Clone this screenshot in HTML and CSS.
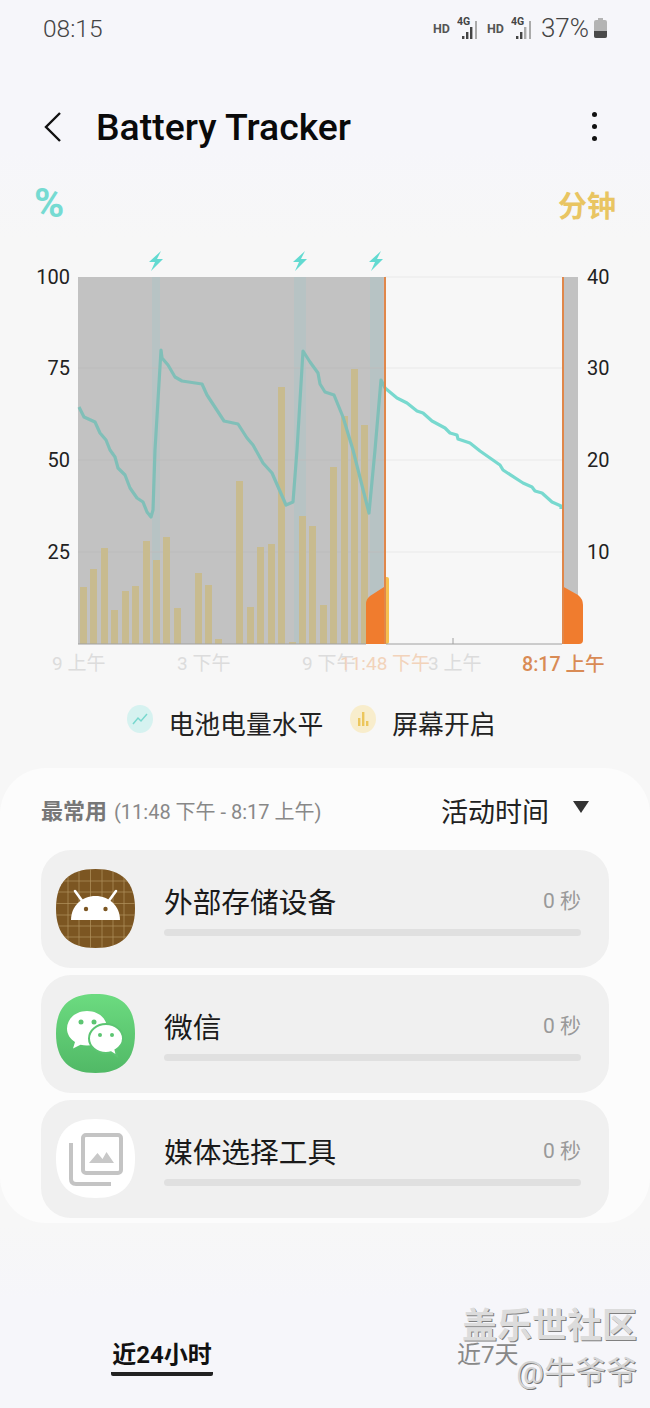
FILE: index.html
```html
<!DOCTYPE html>
<html lang="zh-CN">
<head>
    <meta charset="UTF-8">
    <meta name="viewport" content="width=device-width, initial-scale=1.0">
    <title>Battery Tracker</title>
    <link rel="stylesheet" href="styles.css">
</head>
<body>
    <!-- Status bar -->
    <div class="status-bar">
        <span class="status-time">08:15</span>
        <div class="status-icons">
            <span class="net-hd">HD</span>
            <svg class="net-signal" viewBox="0 0 24 24">
                <text x="0" y="9" class="net-4g">4G</text>
                <rect x="5" y="20" width="2.400" height="3"/>
                <rect x="9" y="16" width="2.400" height="7"/>
                <rect x="13" y="11" width="2.400" height="12"/>
                <rect x="18" y="5" width="2" height="18" class="bar-off"/>
            </svg>
            <span class="net-hd">HD</span>
            <svg class="net-signal" viewBox="0 0 24 24">
                <text x="0" y="9" class="net-4g">4G</text>
                <rect x="5" y="20" width="2.400" height="3"/>
                <rect x="9" y="16" width="2.400" height="7"/>
                <rect x="13" y="11" width="2.400" height="12" class="bar-off"/>
                <rect x="18" y="5" width="2" height="18" class="bar-off"/>
            </svg>
            <span class="status-level">37%</span>
            <svg class="status-battery" viewBox="0 0 13 20">
                <path d="M4 0h5v2h2a2 2 0 0 1 2 2v14a2 2 0 0 1-2 2H2a2 2 0 0 1-2-2V4a2 2 0 0 1 2-2h2z" fill="#b4b4b4"/>
                <path d="M0 13h13v5a2 2 0 0 1-2 2H2a2 2 0 0 1-2-2z" fill="#4a4a4a"/>
            </svg>
        </div>
    </div>

    <!-- Header -->
    <div class="app-header">
        <svg class="back-icon" viewBox="0 0 20 32"><path d="M17 2 3 16l14 14"/></svg>
        <h1 class="app-title">Battery Tracker</h1>
        <div class="more-icon"><i></i><i></i><i></i></div>
    </div>

    <div class="axis-titles">
        <span class="axis-percent">%</span>
        <span class="axis-minutes">分钟</span>
    </div>

    <!-- Chart, viewBox uses the page coordinates -->
    <svg class="chart" viewBox="0 240 650 450">
        <defs>
            <path id="bolt" d="M5-10-7 1h6l-4 9L7-2H1z"/>
        </defs>

        <rect class="plot-off" x="78" y="277" width="307" height="367"/>
        <rect class="plot-off" x="562" y="277" width="16" height="367"/>

        <rect class="band" x="152" y="277" width="8" height="367"/>
        <rect class="band" x="294" y="277" width="12" height="367"/>
        <rect class="band" x="370" y="277" width="13" height="367"/>

        <path class="grid-off" d="M78 368H385M78 460H385M78 552H385"/>
        <path class="grid-on" d="M385 277H562M385 368H562M385 460H562M385 552H562"/>

        <g class="bars">
            <rect x="80" y="587" width="7" height="57"/>
            <rect x="90" y="569" width="7" height="75"/>
            <rect x="101" y="548" width="7" height="96"/>
            <rect x="111" y="610" width="7" height="34"/>
            <rect x="122" y="591" width="7" height="53"/>
            <rect x="132" y="586" width="7" height="58"/>
            <rect x="143" y="541" width="7" height="103"/>
            <rect x="153" y="560" width="7" height="84"/>
            <rect x="163" y="537" width="7" height="107"/>
            <rect x="174" y="608" width="7" height="36"/>
            <rect x="195" y="573" width="7" height="71"/>
            <rect x="205" y="585" width="7" height="59"/>
            <rect x="215" y="639" width="7" height="5"/>
            <rect x="236" y="481" width="7" height="163"/>
            <rect x="247" y="607" width="7" height="37"/>
            <rect x="257" y="547" width="7" height="97"/>
            <rect x="268" y="544" width="7" height="100"/>
            <rect x="278" y="387" width="7" height="257"/>
            <rect x="289" y="642" width="7" height="2"/>
            <rect x="299" y="516" width="7" height="128"/>
            <rect x="309" y="526" width="7" height="118"/>
            <rect x="320" y="605" width="7" height="39"/>
            <rect x="330" y="467" width="7" height="177"/>
            <rect x="341" y="416" width="7" height="228"/>
            <rect x="351" y="369" width="7" height="275"/>
            <rect x="361" y="425" width="7" height="219"/>
        </g>
        <rect class="bar-now" x="384" y="577" width="5" height="67" rx="2"/>

        <path class="level-off" d="M79 407 84 417 95 422 100 433 106 440 110 450 115 457 118 468 125 475 130 488 137 498 143 502 147 512 151 517 153 510 155 450 161 350 162 358 168 365 175 377 182 381 202 384 207 395 224 421 238 424 247 438 253 445 263 463 272 473 286 505 293 502 297 450 303 351 310 362 318 373 320 384 325 392 334 395 343 417 353 450 369 513 375 450 381 380 385 388"/>
        <path class="level-on" d="M385 388 397 398 407 403 417 411 423 413 432 421 445 428 450 433 457 435 458 439 470 443 480 451 500 465 503 470 523 483 532 487 535 491 542 493 552 502 561 506 561 509"/>

        <path class="active" d="M366 644V604Q366 599 370 596L384 587H386V644Z"/>
        <path class="active" d="M562 644V586L578 595Q583 599 583 605V640Q583 644 579 644Z"/>
        <rect class="marker" x="384" y="277" width="2" height="367"/>
        <rect class="marker" x="562" y="277" width="2" height="367"/>

        <path class="baseline" d="M78 644H366M386 644H562"/>
        <path class="baseline" d="M453 638V644"/>

        <use href="#bolt" class="bolt" x="156" y="261"/>
        <use href="#bolt" class="bolt" x="300" y="261"/>
        <use href="#bolt" class="bolt" x="376" y="261"/>

        <text class="tick tick-left" x="70" y="284">100</text>
        <text class="tick tick-left" x="70" y="375">75</text>
        <text class="tick tick-left" x="70" y="467">50</text>
        <text class="tick tick-left" x="70" y="559">25</text>
        <text class="tick" x="587" y="284">40</text>
        <text class="tick" x="587" y="375">30</text>
        <text class="tick" x="587" y="467">20</text>
        <text class="tick" x="587" y="559">10</text>

        <text class="time-label" x="52" y="670">9 上午</text>
        <text class="time-label" x="177" y="670">3 下午</text>
        <text class="time-label" x="302" y="670">9 下午</text>
        <text class="time-label" x="428" y="670">3 上午</text>
        <text class="time-label time-start" x="340" y="670">11:48 下午</text>
        <text class="time-label time-end" x="522" y="671">8:17 上午</text>
    </svg>

    <!-- Legend -->
    <div class="legend">
        <div class="legend-item">
            <svg class="legend-icon" viewBox="0 0 26 28">
                <ellipse cx="13" cy="14" rx="13" ry="14" fill="#d6f2f0"/>
                <path d="M6 19l5-6 3 3 6-7" fill="none" stroke="#78d8ce" stroke-width="1.500"/>
            </svg>
            <span>电池电量水平</span>
        </div>
        <div class="legend-item">
            <svg class="legend-icon" viewBox="0 0 26 28">
                <ellipse cx="13" cy="14" rx="13" ry="14" fill="#f8edcc"/>
                <path d="M8 13h2.400v8H8zM12 7h2.400v14H12zM16 16h2.400v5H16z" fill="#ecc65c"/>
            </svg>
            <span>屏幕开启</span>
        </div>
    </div>

    <!-- Most used apps -->
    <div class="usage-card">
        <div class="usage-head">
            <div class="usage-title"><strong>最常用</strong> (11:48 下午 - 8:17 上午)</div>
            <div class="usage-sort">活动时间<i class="sort-arrow"></i></div>
        </div>

        <div class="app-list">
            <div class="app-row">
                <svg class="app-icon" viewBox="0 0 79 79">
                    <clipPath id="squircle-clip">
                        <path d="M39.500 0C66 0 79 13 79 39.500S66 79 39.500 79 0 66 0 39.500 13 0 39.500 0z"/>
                    </clipPath>
                    <g clip-path="url(#squircle-clip)">
                        <rect width="79" height="79" fill="#7c5622"/>
                        <path d="M12 0V79M23 0V79M34.500 0V79M46 0V79M57 0V79M68 0V79M0 12H79M0 23H79M0 34.500H79M0 46H79M0 57H79M0 68H79" fill="none" stroke="#b3935f" stroke-width=".7"/>
                    </g>
                    <path d="M19 22l8 11M60 22l-8 11" stroke="#fff" stroke-width="2.600" stroke-linecap="round"/>
                    <path d="M15 51C15 37 26 27 39.500 27S64 37 64 51z" fill="#fff"/>
                    <circle cx="30" cy="40" r="2.200" fill="#7c5622"/>
                    <circle cx="49.500" cy="40" r="2.200" fill="#7c5622"/>
                </svg>
                <div class="app-info">
                    <div class="app-line"><span class="app-name">外部存储设备</span><span class="app-time">0 秒</span></div>
                    <div class="app-bar"></div>
                </div>
            </div>
            <div class="app-row">
                <svg class="app-icon" viewBox="0 0 79 79">
                    <defs>
                        <linearGradient id="wechat-bg" x1="0" y1="0" x2="0" y2="1">
                            <stop offset="0" stop-color="#6cdb80"/>
                            <stop offset="1" stop-color="#51b966"/>
                        </linearGradient>
                    </defs>
                    <path d="M39.500 0C66 0 79 13 79 39.500S66 79 39.500 79 0 66 0 39.500 13 0 39.500 0z" fill="url(#wechat-bg)"/>
                    <path d="M31 17C19.500 17 11 25 11 34.500c0 6 3.400 10.500 8 13.500l-2 6.500 7.500-3.800c2 .6 4.300.8 6.500.8 11.500 0 20-8 20-17.500S42.500 17 31 17z" fill="#fff"/>
                    <path d="M50 30c-9.300 0-17 6.500-17 14.500S40.700 59 50 59c2 0 3.500-.2 5-.7l6 3.700-1.500-6c4.500-2.600 7.500-6.800 7.500-11.500C67 36.500 59.300 30 50 30z" fill="#fff" stroke="#5cc572" stroke-width="2"/>
                    <circle cx="25" cy="28" r="2.500" fill="#5cc572"/>
                    <circle cx="38" cy="28" r="2.500" fill="#5cc572"/>
                    <circle cx="44" cy="41" r="2" fill="#5cc572"/>
                    <circle cx="56" cy="41" r="2" fill="#5cc572"/>
                </svg>
                <div class="app-info">
                    <div class="app-line"><span class="app-name">微信</span><span class="app-time">0 秒</span></div>
                    <div class="app-bar"></div>
                </div>
            </div>
            <div class="app-row">
                <svg class="app-icon" viewBox="0 0 79 79">
                    <path d="M39.500 0C66 0 79 13 79 39.500S66 79 39.500 79 0 66 0 39.500 13 0 39.500 0z" fill="#fff"/>
                    <rect x="27" y="16" width="38" height="38" rx="3" fill="none" stroke="#c4c4c4" stroke-width="4"/>
                    <path d="M15 24V60Q15 65 20 65H55" fill="none" stroke="#c4c4c4" stroke-width="4"/>
                    <path d="M33 44 41.500 34 46.500 40 50.500 33 58 44z" fill="#c8c8c8"/>
                </svg>
                <div class="app-info">
                    <div class="app-line"><span class="app-name">媒体选择工具</span><span class="app-time">0 秒</span></div>
                    <div class="app-bar"></div>
                </div>
            </div>
        </div>
    </div>

    <!-- Tabs -->
    <div class="tabs">
        <span class="tab tab-active">近24小时</span>
        <span class="tab">近7天</span>
    </div>

    <div class="watermark">
        <div class="watermark-site">盖乐世社区</div>
        <div class="watermark-user">@牛爷爷</div>
    </div>
</body>
</html>
```

FILE: styles.css
```css
* {
    box-sizing: border-box;
}

body {
    margin: 0;
    width: 650px;
    height: 1408px;
    overflow: hidden;
    position: relative;
    background: linear-gradient(#f6f6fa 150px, #f7f7f7 240px, #f7f7f7 1225px, #f6f6fa 1300px);
    font-family: Roboto, "Noto Sans CJK SC", sans-serif;
    color: #222;
}

/* Status bar */
.status-bar {
    height: 56px;
    padding: 0 43px;
    display: flex;
    align-items: center;
    justify-content: space-between;
}

.status-time {
    font-size: 24.500px;
    font-weight: 300;
    color: #444;
}

.status-icons {
    display: flex;
    align-items: center;
}

.net-hd {
    font-size: 12.500px;
    font-weight: 700;
    color: #555;
    width: 24px;
}

.net-signal {
    width: 24px;
    height: 24px;
    margin-right: 6px;
    fill: #444;
}

.net-signal .bar-off {
    fill: #aaa;
}

.net-4g {
    font-size: 10.500px;
    font-weight: 700;
}

.status-level {
    font-size: 26px;
    font-weight: 300;
    color: #444;
}

.status-battery {
    width: 13px;
    height: 20px;
    margin-left: 5px;
}

/* Header */
.app-header {
    height: 60px;
    margin-top: 41px;
    padding: 0 53px 0 43px;
    display: flex;
    align-items: center;
}

.back-icon {
    width: 20px;
    height: 32px;
    fill: none;
    stroke: #111;
    stroke-width: 2.400;
}

.app-title {
    flex: 1;
    margin: 0 0 0 33px;
    font-size: 37.400px;
    font-weight: 500;
    color: #0a0a0a;
}

.more-icon {
    display: flex;
    flex-direction: column;
    gap: 7px;
    margin-top: -2px;
}

.more-icon i {
    width: 5px;
    height: 5px;
    border-radius: 50%;
    background: #111;
}

.axis-titles {
    height: 40px;
    margin-top: 27px;
    padding: 0 34px;
    display: flex;
    align-items: center;
    justify-content: space-between;
    font-weight: 700;
}

.axis-percent {
    margin-top: -2px;
    font-size: 41px;
    color: #76dbd2;
}

.axis-minutes {
    font-size: 29px;
    color: #e9c562;
}

/* Chart */
.chart {
    display: block;
    width: 650px;
    height: 450px;
    margin-top: 16px;
}

.plot-off {
    fill: #c2c2c2;
}

.band {
    fill: #b7c3c4;
}

.grid-off {
    stroke: #bcbcbc;
    stroke-width: 1;
}

.grid-on {
    stroke: #e9e9e9;
    stroke-width: 1;
}

.bars rect {
    fill: #c8bb8f;
}

.bar-now {
    fill: #f6c04f;
}

.level-off,
.level-on {
    fill: none;
    stroke-width: 3.200;
    stroke-linejoin: round;
}

.level-off {
    stroke: #80bfb8;
}

.level-on {
    stroke: #78d9cf;
}

.active {
    fill: #f07c2e;
}

.marker {
    fill: #e0874a;
}

.baseline {
    stroke: #a0a0a0;
    stroke-width: 1;
    fill: none;
}

.bolt {
    fill: #62dad1;
}

.tick {
    font-size: 20px;
    fill: #222;
}

.tick-left {
    text-anchor: end;
}

.time-label {
    font-size: 19px;
    fill: #dcdcdc;
}

.time-start {
    fill: #f2d3bb;
}

.time-end {
    font-size: 19.600px;
    font-weight: 500;
    fill: #d98b55;
}

/* Legend */
.legend {
    height: 64px;
    display: flex;
    justify-content: center;
    align-items: center;
    gap: 27px;
    padding-right: 28px;
    font-size: 25.800px;
    color: #222;
}

.legend-item {
    display: flex;
    align-items: center;
    gap: 16px;
}

.legend-icon {
    width: 26px;
    height: 28px;
    margin-top: -6px;
}

/* Usage card */
.usage-card {
    height: 455px;
    margin-top: 14px;
    padding: 18px 41px 0;
    background: #fcfcfc;
    border-radius: 46px;
}

.usage-head {
    height: 50px;
    display: flex;
    align-items: center;
    justify-content: space-between;
    padding-right: 20px;
}

.usage-title {
    margin-top: -5px;
    font-size: 20px;
    color: #888;
}

.usage-title strong {
    font-size: 22px;
    margin-right: 2px;
    color: #777;
}

.usage-sort {
    display: flex;
    align-items: center;
    margin-top: -2px;
    font-size: 27px;
    color: #222;
}

.sort-arrow {
    width: 0;
    height: 0;
    margin: -6px 0 0 24px;
    border-left: 8px solid transparent;
    border-right: 8px solid transparent;
    border-top: 12px solid #333;
}

.app-list {
    margin-top: 14px;
    display: flex;
    flex-direction: column;
    gap: 7px;
}

.app-row {
    height: 118px;
    padding: 0 28px 0 15px;
    display: flex;
    align-items: center;
    gap: 29px;
    background: #f0f0f0;
    border-radius: 30px;
}

.app-icon {
    width: 79px;
    height: 79px;
    margin-top: -2px;
    flex-shrink: 0;
}

.app-info {
    flex: 1;
}

.app-line {
    height: 40px;
    padding-bottom: 4px;
    display: flex;
    align-items: center;
    justify-content: space-between;
}

.app-name {
    font-size: 28.700px;
    color: #1a1a1a;
}

.app-time {
    margin-bottom: 3px;
    font-size: 21px;
    color: #999;
}

.app-bar {
    height: 7px;
    margin-top: 6px;
    background: #e0e0e0;
    border-radius: 4px;
}

/* Tabs */
.tabs {
    margin-top: 115px;
    padding-left: 111px;
    display: flex;
    gap: 244px;
}

.tab {
    height: 38px;
    font-size: 24px;
    line-height: 34px;
    color: #888;
}

.tab-active {
    width: 102px;
    font-weight: 700;
    color: #111;
    text-align: center;
    border-bottom: 4px solid #222;
    border-radius: 0 0 2px 2px;
}

/* Screenshot watermark lies over the tabs */
.watermark {
    position: absolute;
    right: 13px;
    top: 1305px;
    text-align: right;
}

.watermark-site {
    font-size: 35px;
    line-height: 44px;
    font-weight: 700;
    color: #dcdcdc;
    text-shadow: 1px 1px 0 #808080;
}

.watermark-user {
    font-size: 31px;
    line-height: 48px;
    color: #d4d4d4;
    text-shadow: 1px 1px 0 #777;
}
```
